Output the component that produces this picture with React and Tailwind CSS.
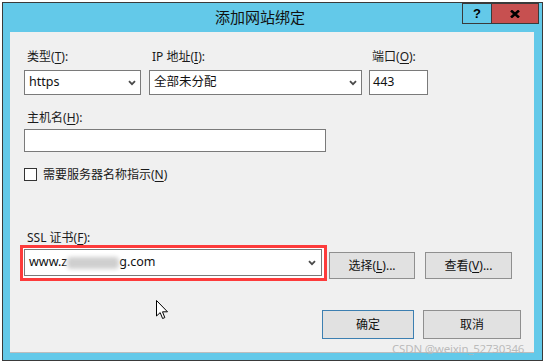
import React from 'react';

const font = { fontFamily: '"Noto Sans", "Noto Sans CJK SC", sans-serif' };

function Chevron() {
  return (
    <svg width="8" height="6" viewBox="0 0 8 6" className="shrink-0">
      <path d="M1 1.2 L4 4.2 L7 1.2" fill="none" stroke="#4a4a4a" strokeWidth="1.8" />
    </svg>
  );
}

function Label({ text, hot, tail = '):' }) {
  return (
    <div className="h-[14px] leading-[14px] text-[12px] text-[#1a1a1a] pl-[3px] whitespace-nowrap">
      {text}(<span className="underline underline-offset-2">{hot}</span>{tail}
    </div>
  );
}

function Select({ value, className }) {
  return (
    <div className={`h-[25px] bg-white border border-[#7a7a7a] flex items-center pl-[4px] pr-[4px] ${className}`}>
      <span className="flex-1 text-[12.5px] text-[#111]">{value}</span>
      <Chevron />
    </div>
  );
}

function Button({ children, primary, className }) {
  return (
    <div
      className={`flex items-center justify-center bg-[#e1e1e1] border text-[12px] text-[#111] ${
        primary ? 'border-[#3c7fb1]' : 'border-[#8f8f8f]'
      } ${className}`}
    >
      {children}
    </div>
  );
}

export default function App() {
  return (
    <div className="relative w-[545px] h-[364px] bg-white overflow-hidden pl-[2px] pt-[2px]" style={font}>
      {/* window */}
      <div className="w-[541px] h-[359px] border border-[#3a3a3a] bg-[#63c9e9] flex flex-col">
        {/* title bar */}
        <div className="h-[29px] flex items-start">
          <div className="flex-1 h-[29px] flex items-center justify-center pl-[55px] text-[15px] text-[#111]">
            添加网站绑定
          </div>
          <div className="flex h-[21px] border border-[#3a3a3a] mr-[3px]">
            <div className="w-[28px] flex items-center justify-center text-[13px] font-bold text-black" style={{ fontFamily: '"Liberation Sans", sans-serif' }}>
              ?
            </div>
            <div className="w-[47px] bg-[#c75050] border-l border-[#3a3a3a] flex items-center justify-center">
              <svg width="10" height="8" viewBox="0 0 10 8">
                <path d="M1 0.5 L9 7.5 M9 0.5 L1 7.5" stroke="#000" strokeWidth="2.6" />
              </svg>
            </div>
          </div>
        </div>

        {/* client area */}
        <div className="flex-1 ml-[7px] mr-[8px] mb-[7px] bg-[#f0f0f0] border-b border-[#bdbdbd] pl-[14px] pt-[18px]">
          {/* row 1 */}
          <div className="flex">
            <div className="w-[117px] flex flex-col gap-[6px]">
              <Label text="类型" hot="T" />
              <Select value="https" />
            </div>
            <div className="w-[213px] ml-[8px] flex flex-col gap-[6px]">
              <Label text="IP 地址" hot="I" />
              <Select value="全部未分配" />
            </div>
            <div className="w-[59px] ml-[7px] flex flex-col gap-[6px]">
              <Label text="端口" hot="O" />
              <div className="h-[25px] bg-white border border-[#7a7a7a] flex items-center pl-[3px] text-[12.5px] text-[#111]">
                443
              </div>
            </div>
          </div>

          {/* host */}
          <div className="mt-[16px]">
            <Label text="主机名" hot="H" />
            <div className="mt-[4px] w-[302px] h-[23px] bg-white border border-[#7a7a7a]" />
          </div>

          {/* checkbox */}
          <div className="mt-[16px] flex items-center h-[13px]">
            <div className="w-[13px] h-[13px] bg-white border border-[#333]" />
            <span className="ml-[6px] text-[12px] text-[#1a1a1a]">
              需要服务器名称指示(<span className="underline underline-offset-2">N</span>)
            </span>
          </div>

          {/* ssl */}
          <div className="mt-[50px]">
            <Label text="SSL 证书" hot="F" />
          </div>
          <div className="flex items-start -ml-[4px]">
            <div className="w-[307px] h-[36px] border-[3px] border-[#fd3b3b] bg-white pl-[1px] pr-[2px] pt-[1px]">
              <div className="h-[27px] border border-[#7a7a7a] flex items-center pl-[4px] pr-[5px]">
                <span className="flex-1 flex items-center text-[12.5px] text-[#111]">
                  www.z
                  <span className="inline-block w-[52px] h-[12px] bg-[#cfcfcf] rounded-[4px] blur-[2px]" />
                  g.com
                </span>
                <Chevron />
              </div>
            </div>
            <Button className="ml-[2px] mt-[7px] w-[86px] h-[27px]">
              选择(<span className="underline underline-offset-2">L</span>)...
            </Button>
            <Button className="ml-[10px] mt-[7px] w-[87px] h-[27px]">
              查看(<span className="underline underline-offset-2">V</span>)...
            </Button>
          </div>

          {/* ok / cancel */}
          <div className="mt-[29px] flex justify-end pr-[13px]">
            <Button primary className="w-[92px] h-[29px]">确定</Button>
            <Button className="ml-[9px] w-[98px] h-[29px]">取消</Button>
          </div>
        </div>
      </div>

      {/* mouse cursor */}
      <svg className="absolute left-[156px] top-[300px]" width="13" height="20" viewBox="0 0 13 20">
        <path d="M0.5 0.5 L0.5 16 L4.2 12.6 L6.6 18.5 L8.8 17.6 L6.5 11.8 L11.5 11.8 Z" fill="#fff" stroke="#000" strokeWidth="1" />
      </svg>

      {/* watermark */}
      <div className="absolute left-[392px] top-[340px] text-[11.5px] tracking-[-0.2px] text-[#b4b4b4]/90 whitespace-nowrap">
        CSDN @weixin_52730346
      </div>
    </div>
  );
}
